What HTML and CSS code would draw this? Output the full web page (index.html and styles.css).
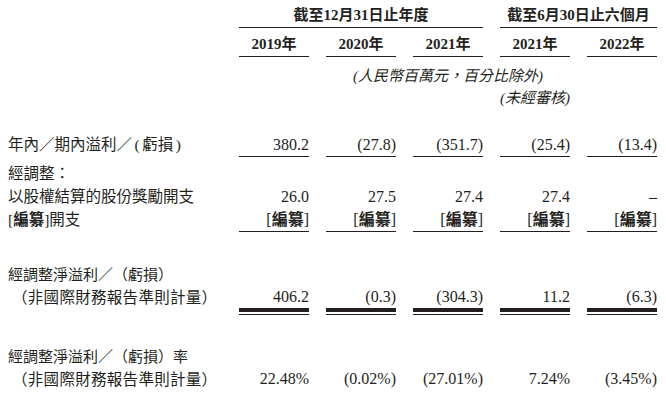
FILE: index.html
```html
<!DOCTYPE html>
<html lang="zh-Hant">
<head>
<meta charset="utf-8">
<title>經調整淨溢利</title>
<link rel="stylesheet" href="styles.css">
</head>
<body>
<div class="sheet">
  <div class="row head">
    <div class="label"></div>
    <div class="group g1">截至12月31日止年度</div>
    <div class="group g2">截至6月30日止六個月</div>
  </div>
  <div class="row years">
    <div class="label"></div>
    <div class="yr">2019年</div>
    <div class="yr">2020年</div>
    <div class="yr">2021年</div>
    <div class="yr">2021年</div>
    <div class="yr">2022年</div>
  </div>
  <div class="row units">
    <div class="unit1">(人民幣百萬元，百分比除外)</div>
  </div>
  <div class="row units2">
    <div class="unit2"><span>(未經審核)</span></div>
  </div>

  <div class="row line r-profit">
    <div class="label">年內／期內溢利／<span class="p">(</span>虧損<span class="p">)</span></div>
    <div class="num ul">380.2</div>
    <div class="num ul">(27.8)</div>
    <div class="num ul">(351.7)</div>
    <div class="num ul">(25.4)</div>
    <div class="num ul">(13.4)</div>
  </div>
  <div class="row line r-adj">
    <div class="label">經調整：</div>
  </div>
  <div class="row line">
    <div class="label">以股權結算的股份獎勵開支</div>
    <div class="num">26.0</div>
    <div class="num">27.5</div>
    <div class="num">27.4</div>
    <div class="num">27.4</div>
    <div class="num">–</div>
  </div>
  <div class="row line">
    <div class="label">[<b>編纂</b>]開支</div>
    <div class="num ul">[<b>編纂</b>]</div>
    <div class="num ul">[<b>編纂</b>]</div>
    <div class="num ul">[<b>編纂</b>]</div>
    <div class="num ul">[<b>編纂</b>]</div>
    <div class="num ul">[<b>編纂</b>]</div>
  </div>

  <div class="row line r-net">
    <div class="label sans">經調整淨溢利／（虧損）</div>
  </div>
  <div class="row line">
    <div class="label sans sub">（非國際財務報告準則計量）</div>
    <div class="num dbl">406.2</div>
    <div class="num dbl">(0.3)</div>
    <div class="num dbl">(304.3)</div>
    <div class="num dbl">11.2</div>
    <div class="num dbl">(6.3)</div>
  </div>

  <div class="row line r-rate">
    <div class="label sans">經調整淨溢利／（虧損）率</div>
  </div>
  <div class="row line">
    <div class="label sans sub">（非國際財務報告準則計量）</div>
    <div class="num">22.48%</div>
    <div class="num">(0.02%)</div>
    <div class="num">(27.01%)</div>
    <div class="num">7.24%</div>
    <div class="num">(3.45%)</div>
  </div>
</div>
</body>
</html>
```

FILE: styles.css
```css
html, body {
  margin: 0;
  padding: 0;
  background: #ffffff;
}

body {
  font-family: "Liberation Serif", "Noto Sans CJK TC", serif;
  font-size: 15.5px;
  color: #231f20;
}

.sheet {
  padding: 4px 9px 0 8px;
}

.row {
  display: grid;
  grid-template-columns: 1fr repeat(5, 70px);
  column-gap: 17px;
}

.head .group {
  font-weight: 700;
  font-size: 15px;
  line-height: 23px;
  height: 23px;
  text-align: center;
  border-bottom: 1px solid #231f20;
}

.g1 { grid-column: 2 / 5; }
.g2 { grid-column: 5 / 7; }

.years {
  margin-top: 5px;
}

.yr {
  font-weight: 700;
  font-size: 15px;
  line-height: 23px;
  height: 23px;
  text-align: center;
  border-bottom: 1px solid #231f20;
}

.units {
  margin-top: 9px;
}

.unit1,
.unit2 {
  font-style: italic;
  font-size: 15px;
  line-height: 21px;
  white-space: nowrap;
}

.unit1 {
  grid-column: 3 / 6;
  text-align: center;
}

.units2 {
  margin-top: 1px;
}

.unit2 {
  grid-column: 5 / 6;
  display: flex;
  justify-content: center;
}

.line {
  line-height: 23px;
}

.line > div {
  height: 23px;
}

.r-profit { margin-top: 24px; }
.r-adj { margin-top: 5px; }
.r-net { margin-top: 30px; }
.r-rate { margin-top: 32px; }

.label {
  white-space: nowrap;
}

.label .p {
  padding: 0 2.5px;
}

.label b,
.num b {
  font-weight: 700;
}

.sans {
  font-family: "Noto Sans CJK TC", sans-serif;
  font-size: 15px;
}

.sub {
  font-size: 15.5px;
  letter-spacing: 0.3px;
  padding-left: 4px;
}

.num {
  text-align: right;
  font-size: 16px;
}

.ul {
  border-bottom: 1px solid #231f20;
}

.dbl {
  border-bottom: 4px solid #231f20;
  box-shadow: 0 2px 0 #ffffff, 0 3px 0 #231f20;
}
```
